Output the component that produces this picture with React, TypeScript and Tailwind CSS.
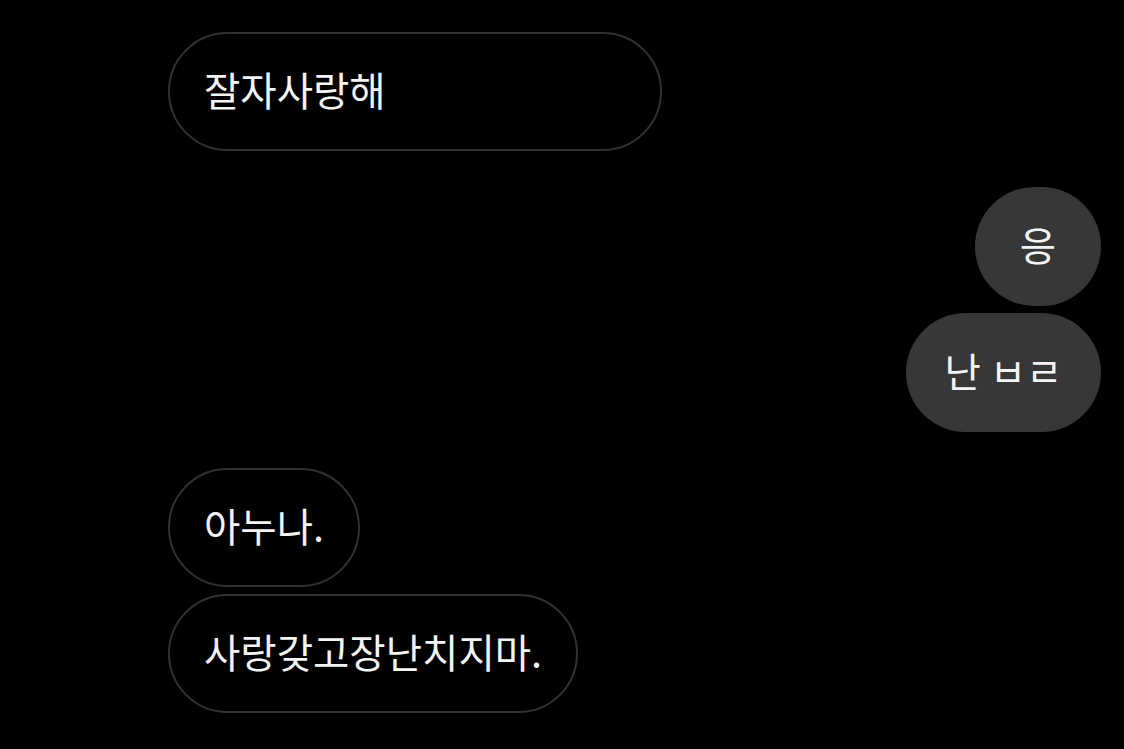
const bubbleBase =
  'h-[119px] flex items-center rounded-full text-[39.5px] leading-none text-[#f4f4f4] whitespace-nowrap pb-[6px]'

const Received = ({ text, width }: { text: string; width?: string }) => (
  <div className={`${bubbleBase} border-2 border-[#323232] bg-black pl-[34px] pr-[34px] ${width ?? ''}`}>
    <span>{text}</span>
  </div>
)

const Sent = ({ text, className }: { text: string; className?: string }) => (
  <div className={`${bubbleBase} bg-[#373737] justify-center ${className ?? ''}`}>
    <span>{text}</span>
  </div>
)

export default function App() {
  return (
    <div
      className="w-[1124px] h-[749px] bg-black overflow-hidden flex flex-col pt-[32px] pl-[168px] pr-[23px]"
      style={{ fontFamily: '"Noto Sans CJK KR", "Noto Sans", sans-serif' }}
    >
      {/* 첫 메시지 (뒷부분 가림) */}
      <div className="flex">
        <Received text="잘자사랑해" width="w-[494px]" />
      </div>

      {/* 보낸 메시지 */}
      <div className="flex flex-col items-end gap-[7px] mt-[36px]">
        <Sent text="응" className="w-[126px]" />
        <Sent text="난 ㅂㄹ" className="w-[195px]" />
      </div>

      {/* 받은 메시지 */}
      <div className="flex flex-col items-start gap-[7px] mt-[36px]">
        <Received text="아누나." />
        <Received text="사랑갖고장난치지마." />
      </div>
    </div>
  )
}
